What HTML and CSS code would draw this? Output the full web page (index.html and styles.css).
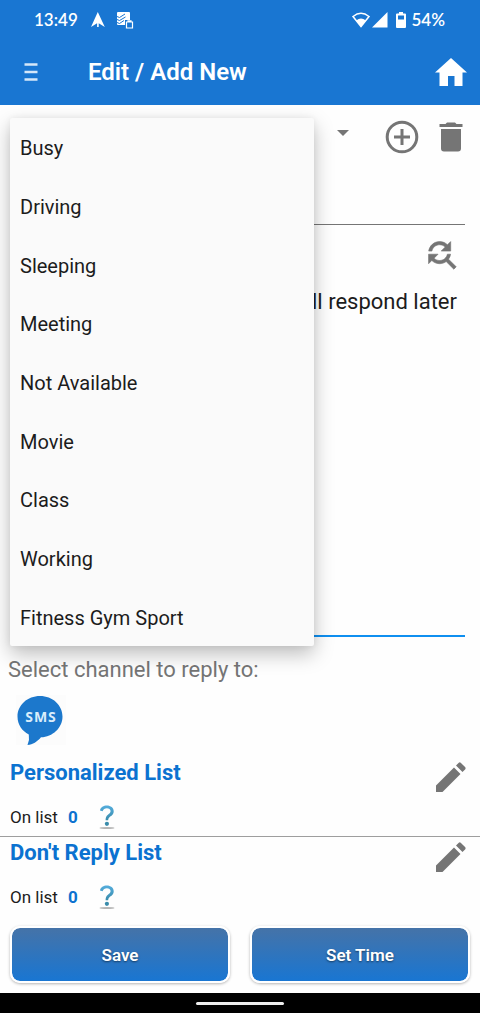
FILE: index.html
```html
<!DOCTYPE html>
<html lang="en">
<head>
<meta charset="utf-8">
<meta name="viewport" content="width=device-width, initial-scale=1">
<title>Edit / Add New</title>
<link rel="stylesheet" href="styles.css">
</head>
<body>
<div class="status">
  <span class="clock">13:49</span>
  <svg class="status-icon nav-arrow" viewBox="0 0 16 18" width="16" height="18" aria-hidden="true"><path d="M7.800 1 14.800 16 8.700 12.300V16H7.100V12.300L1 16Z" fill="#fff"/></svg>
  <svg class="status-icon" viewBox="0 0 18 18" width="18" height="18" aria-hidden="true">
    <path d="M2 1H13Q14 1 14 2V9H9V14H2Q1 14 1 13V2Q1 1 2 1Z" fill="#fff"/>
    <path d="M1 5.500 3.500 6.500 9 3M1 8.500 3.500 9.500 9.500 6M1 11.500 3.500 12.500 8 9.500" fill="none" stroke="#1976d2" stroke-width="1"/>
    <path d="M10.500 11H16.500V17H10.500ZM12 11V9.800H15V11" fill="#1976d2" stroke="#fff" stroke-width="1.200"/>
  </svg>
  <span class="spacer"></span>
  <svg class="wifi" viewBox="0 0 18 16" width="18" height="16" aria-hidden="true"><path d="M1 4.500Q9-1.800 17 4.500L9 14.500Z" fill="none" stroke="#fff" stroke-width="1.500"/><path d="M4.200 8.500Q9 4.500 13.800 8.500L9 14.800Z" fill="#fff"/></svg>
  <svg viewBox="0 0 16 16" width="16" height="16" aria-hidden="true"><path d="M15.500 0V15.500H0Z" fill="#fff"/></svg>
  <svg class="battery" viewBox="0 0 10 16" width="10" height="16" aria-hidden="true"><path d="M3 0H7V1.500H9Q10 1.500 10 2.500V15Q10 16 9 16H1Q0 16 0 15V2.500Q0 1.500 1 1.500H3Z" fill="#fff"/><path d="M2 3.500H8V7.500H2Z" fill="#1976d2"/></svg>
  <span class="charge">54%</span>
</div>

<header class="appbar">
  <button class="icon-button menu-button" type="button" aria-label="Menu">
    <svg viewBox="0 0 14 20" width="14" height="20"><path d="M0.500 2.500H13.500M0.500 10H13.500M0.500 17.500H13.500" stroke="#d5e7f9" stroke-width="2.500"/></svg>
  </button>
  <h1 class="title">Edit / Add New</h1>
  <a class="home" href="#" aria-label="Home">
    <svg viewBox="0 0 32 28" width="32" height="28"><path d="M16 0 32 14.500H27.500V28H19.500V18H13V28H4.500V14.500H0Z" fill="#fff"/></svg>
  </a>
</header>

<main class="content">
  <section class="editor">
    <div class="status-row">
      <select class="status-select" aria-label="Status">
        <option>Busy</option><option>Driving</option><option>Sleeping</option><option>Meeting</option><option>Not Available</option><option>Movie</option><option>Class</option><option>Working</option><option>Fitness Gym Sport</option>
      </select>
      <svg class="caret" viewBox="0 0 12 6" width="12" height="6" aria-hidden="true"><path d="M0 0H12L6 6Z" fill="#757575"/></svg>
      <button class="icon-button" type="button" aria-label="Add">
        <svg viewBox="0 0 34 34" width="34" height="34"><circle cx="17" cy="17" r="14.800" fill="none" stroke="#757575" stroke-width="3"/><path d="M17 9V25M9 17H25" stroke="#757575" stroke-width="3"/></svg>
      </button>
      <button class="icon-button" type="button" aria-label="Delete">
        <svg viewBox="0 0 24 30" width="24" height="30"><path d="M0.500 2H6.500L8 0.500H16L17.500 2H23.500V5H0.500ZM2 7H22V26.500Q22 29.500 19 29.500H5Q2 29.500 2 26.500Z" fill="#757575"/></svg>
      </button>
    </div>
    <input class="name-field" type="text" aria-label="Name">
    <div class="find-row">
      <button class="icon-button" type="button" aria-label="Find and replace">
        <svg viewBox="3 3 19 19" width="30" height="30"><path d="M11 6c1.380 0 2.630.56 3.540 1.460L12 10h6V4l-2.050 2.050C14.680 4.780 12.930 4 11 4c-3.530 0-6.430 2.610-6.920 6H6.100c.46-2.280 2.480-4 4.900-4zm5.640 9.140c.66-.9 1.120-1.970 1.280-3.140H15.900c-.46 2.280-2.480 4-4.900 4-1.380 0-2.630-.56-3.540-1.460L10 12H4v6l2.050-2.050C7.320 17.220 9.070 18 11 18c1.550 0 2.980-.51 4.140-1.360L20 21.490 21.490 20l-4.850-4.860z" fill="#757575" stroke="#757575" stroke-width="0.400"/></svg>
      </button>
    </div>
    <textarea class="message" aria-label="Message">I'll respond later</textarea>
    <ul class="popup" role="listbox" aria-label="Status">
      <li class="choice" role="option">Busy</li>
      <li class="choice" role="option">Driving</li>
      <li class="choice" role="option">Sleeping</li>
      <li class="choice" role="option">Meeting</li>
      <li class="choice" role="option">Not Available</li>
      <li class="choice" role="option">Movie</li>
      <li class="choice" role="option">Class</li>
      <li class="choice" role="option">Working</li>
      <li class="choice" role="option">Fitness Gym Sport</li>
    </ul>
  </section>

  <section class="channels">
    <h2 class="channel-label">Select channel to reply to:</h2>
    <button class="icon-button channel" type="button" aria-label="SMS">
      <svg viewBox="0 0 50 50" width="50" height="50"><rect width="50" height="50" fill="#fcfcfc"/><path d="M24 1C36.500 1 46.500 10 46.500 21.500S36.500 42 25 42.300C21 47 17 49.500 11.500 50Q13.800 45 12.800 39.500C6 36 1.500 29.500 1.500 21.500 1.500 10 11.500 1 24 1Z" fill="#1c78cc"/><text class="sms-text" x="25" y="27" text-anchor="middle">SMS</text></svg>
    </button>
  </section>

  <section class="list">
    <div class="list-main">
      <h2 class="list-title">Personalized List</h2>
      <p class="list-info">On list <b class="count">0</b>
        <button class="icon-button help" type="button" aria-label="Help">
          <svg viewBox="0 0 16 24" width="16" height="24"><defs><linearGradient id="q" x1="0" y1="0" x2="0" y2="1"><stop offset="0" stop-color="#55addd"/><stop offset="1" stop-color="#398cab"/></linearGradient></defs><ellipse cx="8" cy="23" rx="7.500" ry="1" fill="#b5b5b5"/><path d="M1 5.500C1.500 2 4.500 0.500 8 0.500S14.700 2.700 14.700 6.200C14.700 9.500 12.500 10.500 11 11.800 9.800 12.900 9.300 13.500 9.200 15.300H6.600C6.600 12.500 7.200 11.200 8.900 9.700 10.600 8.300 11.600 7.800 11.600 6.100 11.600 4.200 9.900 3.200 7.900 3.200S4.200 4 3.600 6.300Z" fill="url(#q)"/><circle cx="7.900" cy="18.800" r="2.100" fill="#398cab"/></svg>
        </button>
      </p>
    </div>
    <button class="icon-button edit" type="button" aria-label="Edit personalized list">
      <svg viewBox="0 0 30 30" width="30" height="30"><path d="M0 23.500 18 5.500 24.500 12 6.500 30H0ZM20 3.500 22.800 0.700Q23.800 0 24.700 0.700L29.300 5.300Q30 6.200 29.300 7.200L26.500 10Z" fill="#757575"/></svg>
    </button>
  </section>
  <section class="list">
    <div class="list-main">
      <h2 class="list-title">Don't Reply List</h2>
      <p class="list-info">On list <b class="count">0</b>
        <button class="icon-button help" type="button" aria-label="Help">
          <svg viewBox="0 0 16 24" width="16" height="24"><ellipse cx="8" cy="23" rx="7.500" ry="1" fill="#b5b5b5"/><path d="M1 5.500C1.500 2 4.500 0.500 8 0.500S14.700 2.700 14.700 6.200C14.700 9.500 12.500 10.500 11 11.800 9.800 12.900 9.300 13.500 9.200 15.300H6.600C6.600 12.500 7.200 11.200 8.900 9.700 10.600 8.300 11.600 7.800 11.600 6.100 11.600 4.200 9.900 3.200 7.900 3.200S4.200 4 3.600 6.300Z" fill="url(#q)"/><circle cx="7.900" cy="18.800" r="2.100" fill="#398cab"/></svg>
        </button>
      </p>
    </div>
    <button class="icon-button edit" type="button" aria-label="Edit don't reply list">
      <svg viewBox="0 0 30 30" width="30" height="30"><path d="M0 23.500 18 5.500 24.500 12 6.500 30H0ZM20 3.500 22.800 0.700Q23.800 0 24.700 0.700L29.300 5.300Q30 6.200 29.300 7.200L26.500 10Z" fill="#757575"/></svg>
    </button>
  </section>

  <div class="actions">
    <button class="action" type="button">Save</button>
    <button class="action" type="button">Set Time</button>
  </div>
</main>
<div class="navbar"><span class="handle"></span></div>
</body>
</html>
```
FILE: styles.css
```css
* { box-sizing: border-box; }
body {
  margin: 0;
  min-height: 100vh;
  display: flex;
  flex-direction: column;
  background: #fefefe;
  color: #1c1c1c;
  font-family: Roboto, "Liberation Sans", sans-serif;
}
svg { display: block; flex: none; }
h1, h2, p, ul { margin: 0; padding: 0; }
.icon-button {
  display: flex;
  padding: 0;
  border: 0;
  background: none;
}
.status {
  display: flex;
  align-items: center;
  height: 39px;
  padding: 0 35px 0 34px;
  background: #1976d2;
  color: #fff;
  font-family: Lato, Roboto, sans-serif;
  font-size: 17px;
  font-weight: 600;
}
.nav-arrow { margin: 0 10px 0 12px; }
.spacer { flex: 1; }
.wifi { margin-right: 2px; }
.battery { margin: 0 5px 0 8px; }
.appbar {
  display: flex;
  align-items: center;
  height: 66px;
  padding: 0 13px 0 24px;
  background: #1976d2;
  color: #fff;
}
.title {
  flex: 1;
  margin-left: 50px;
  font-size: 24px;
  font-weight: 600;
}
.content {
  flex: 1;
  display: flex;
  flex-direction: column;
}
.editor {
  position: relative;
  flex: 1;
  display: flex;
  flex-direction: column;
  padding: 0 15px 0 10px;
}
.status-row {
  display: flex;
  align-items: center;
  height: 64px;
  padding-right: 2px;
}
.status-select {
  flex: 1;
  height: 40px;
  padding: 0 10px;
  border: 0;
  background: none;
  appearance: none;
  font: 20px Roboto, sans-serif;
}
.caret { margin: 0 36px 8px 0; }
.status-row .icon-button + .icon-button { margin-left: 20px; }
.name-field {
  height: 56px;
  border: 0;
  border-bottom: 1px solid #757575;
  background: none;
  font: 22px Roboto, sans-serif;
}
.find-row {
  display: flex;
  align-items: center;
  justify-content: flex-end;
  height: 60px;
  padding-right: 8px;
}
.message {
  flex: 1;
  padding: 4px 8px;
  border: 0;
  border-bottom: 2px solid #0f8ff0;
  background: none;
  color: #1c1c1c;
  font: 22px/26px Roboto, sans-serif;
  text-align: right;
  resize: none;
}
.popup {
  position: absolute;
  top: 13px;
  bottom: -9px;
  left: 10px;
  width: 304px;
  display: flex;
  flex-direction: column;
  border-radius: 2px;
  background: #fafafa;
  box-shadow: 0 8px 20px rgba(0, 0, 0, 0.26), 0 0 6px rgba(0, 0, 0, 0.06);
  list-style: none;
}
.choice {
  flex: 1;
  display: flex;
  align-items: center;
  padding: 2px 10px 0;
  font-size: 20px;
}
.channels { padding: 17px 8px 12px; }
.channel-label {
  color: #757575;
  font-size: 22px;
  font-weight: 400;
  line-height: 32px;
}
.channel { margin: 9px 0 0 8px; }
.sms-text {
  fill: #d9ecfb;
  font: 700 14px "Open Sans", sans-serif;
  letter-spacing: 1px;
}
.list {
  display: flex;
  align-items: flex-start;
  justify-content: space-between;
  padding: 0 14px 0 10px;
}
.list + .list { border-top: 1px solid #9e9e9e; }
.list-title {
  margin-bottom: 8px;
  color: #0b72d0;
  font-size: 22px;
  font-weight: 700;
  line-height: 32px;
}
.list-info {
  display: flex;
  align-items: center;
  height: 39px;
  font-size: 17px;
}
.count {
  margin: 0 21px 0 10px;
  color: #0b72d0;
}
.edit { margin-top: 5px; }
.actions {
  display: grid;
  grid-template-columns: 1fr 1fr;
  gap: 20px;
  padding: 10px;
}
.action {
  height: 57px;
  border: 2px solid #fff;
  border-radius: 10px;
  background: linear-gradient(#4573a8, #1976d2) padding-box;
  box-shadow: 0 1px 3px rgba(0, 0, 0, 0.3);
  color: #fff;
  font: 600 17px Roboto, sans-serif;
  text-shadow: 0 1px 2px rgba(0, 0, 0, 0.5);
}
.navbar {
  display: flex;
  align-items: center;
  justify-content: center;
  height: 20px;
  background: #000;
}
.handle {
  width: 88px;
  height: 3px;
  border-radius: 2px;
  background: #eee;
}
```
